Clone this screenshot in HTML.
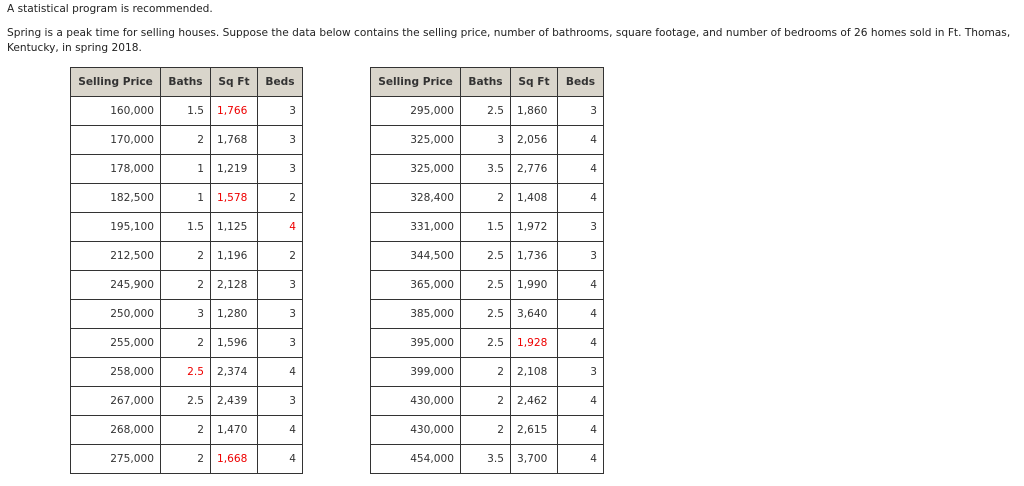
<!DOCTYPE html>
<html><head><meta charset="utf-8"><style>
body{margin:0;background:#fff;font-family:"DejaVu Sans","Liberation Sans",sans-serif;color:#222;font-size:10.6px;width:1024px;height:486px;overflow:hidden;position:relative}
p{margin:0;position:absolute;left:7px;line-height:15px;white-space:nowrap}
table{position:absolute;top:67px;border-collapse:collapse;table-layout:fixed}
td,th{border:1px solid #333;padding:0 6px;height:28px;font-size:10.6px;color:#333;text-align:right;white-space:nowrap;overflow:hidden}
th{background:#d9d5cb;text-align:center;font-weight:bold;color:#333;padding:0 2px}
td.s{text-align:left}
.r{color:#e00}
</style></head><body>
<p style="top:2px">A statistical program is recommended.</p>
<p style="top:26px">Spring is a peak time for selling houses. Suppose the data below contains the selling price, number of bathrooms, square footage, and number of bedrooms of 26 homes sold in Ft. Thomas,<br>Kentucky, in spring 2018.</p>
<table style="left:70px"><colgroup><col style="width:90px"><col style="width:50px"><col style="width:47px"><col style="width:45px"></colgroup>
<tr><th>Selling Price</th><th>Baths</th><th>Sq Ft</th><th>Beds</th></tr>
<tr><td>160,000</td><td>1.5</td><td class="s r">1,766</td><td>3</td></tr>
<tr><td>170,000</td><td>2</td><td class="s">1,768</td><td>3</td></tr>
<tr><td>178,000</td><td>1</td><td class="s">1,219</td><td>3</td></tr>
<tr><td>182,500</td><td>1</td><td class="s r">1,578</td><td>2</td></tr>
<tr><td>195,100</td><td>1.5</td><td class="s">1,125</td><td class="r">4</td></tr>
<tr><td>212,500</td><td>2</td><td class="s">1,196</td><td>2</td></tr>
<tr><td>245,900</td><td>2</td><td class="s">2,128</td><td>3</td></tr>
<tr><td>250,000</td><td>3</td><td class="s">1,280</td><td>3</td></tr>
<tr><td>255,000</td><td>2</td><td class="s">1,596</td><td>3</td></tr>
<tr><td>258,000</td><td class="r">2.5</td><td class="s">2,374</td><td>4</td></tr>
<tr><td>267,000</td><td>2.5</td><td class="s">2,439</td><td>3</td></tr>
<tr><td>268,000</td><td>2</td><td class="s">1,470</td><td>4</td></tr>
<tr><td>275,000</td><td>2</td><td class="s r">1,668</td><td>4</td></tr>
</table>
<table style="left:370px"><colgroup><col style="width:90px"><col style="width:50px"><col style="width:47px"><col style="width:46px"></colgroup>
<tr><th>Selling Price</th><th>Baths</th><th>Sq Ft</th><th>Beds</th></tr>
<tr><td>295,000</td><td>2.5</td><td class="s">1,860</td><td>3</td></tr>
<tr><td>325,000</td><td>3</td><td class="s">2,056</td><td>4</td></tr>
<tr><td>325,000</td><td>3.5</td><td class="s">2,776</td><td>4</td></tr>
<tr><td>328,400</td><td>2</td><td class="s">1,408</td><td>4</td></tr>
<tr><td>331,000</td><td>1.5</td><td class="s">1,972</td><td>3</td></tr>
<tr><td>344,500</td><td>2.5</td><td class="s">1,736</td><td>3</td></tr>
<tr><td>365,000</td><td>2.5</td><td class="s">1,990</td><td>4</td></tr>
<tr><td>385,000</td><td>2.5</td><td class="s">3,640</td><td>4</td></tr>
<tr><td>395,000</td><td>2.5</td><td class="s r">1,928</td><td>4</td></tr>
<tr><td>399,000</td><td>2</td><td class="s">2,108</td><td>3</td></tr>
<tr><td>430,000</td><td>2</td><td class="s">2,462</td><td>4</td></tr>
<tr><td>430,000</td><td>2</td><td class="s">2,615</td><td>4</td></tr>
<tr><td>454,000</td><td>3.5</td><td class="s">3,700</td><td>4</td></tr>
</table>
</body></html>
